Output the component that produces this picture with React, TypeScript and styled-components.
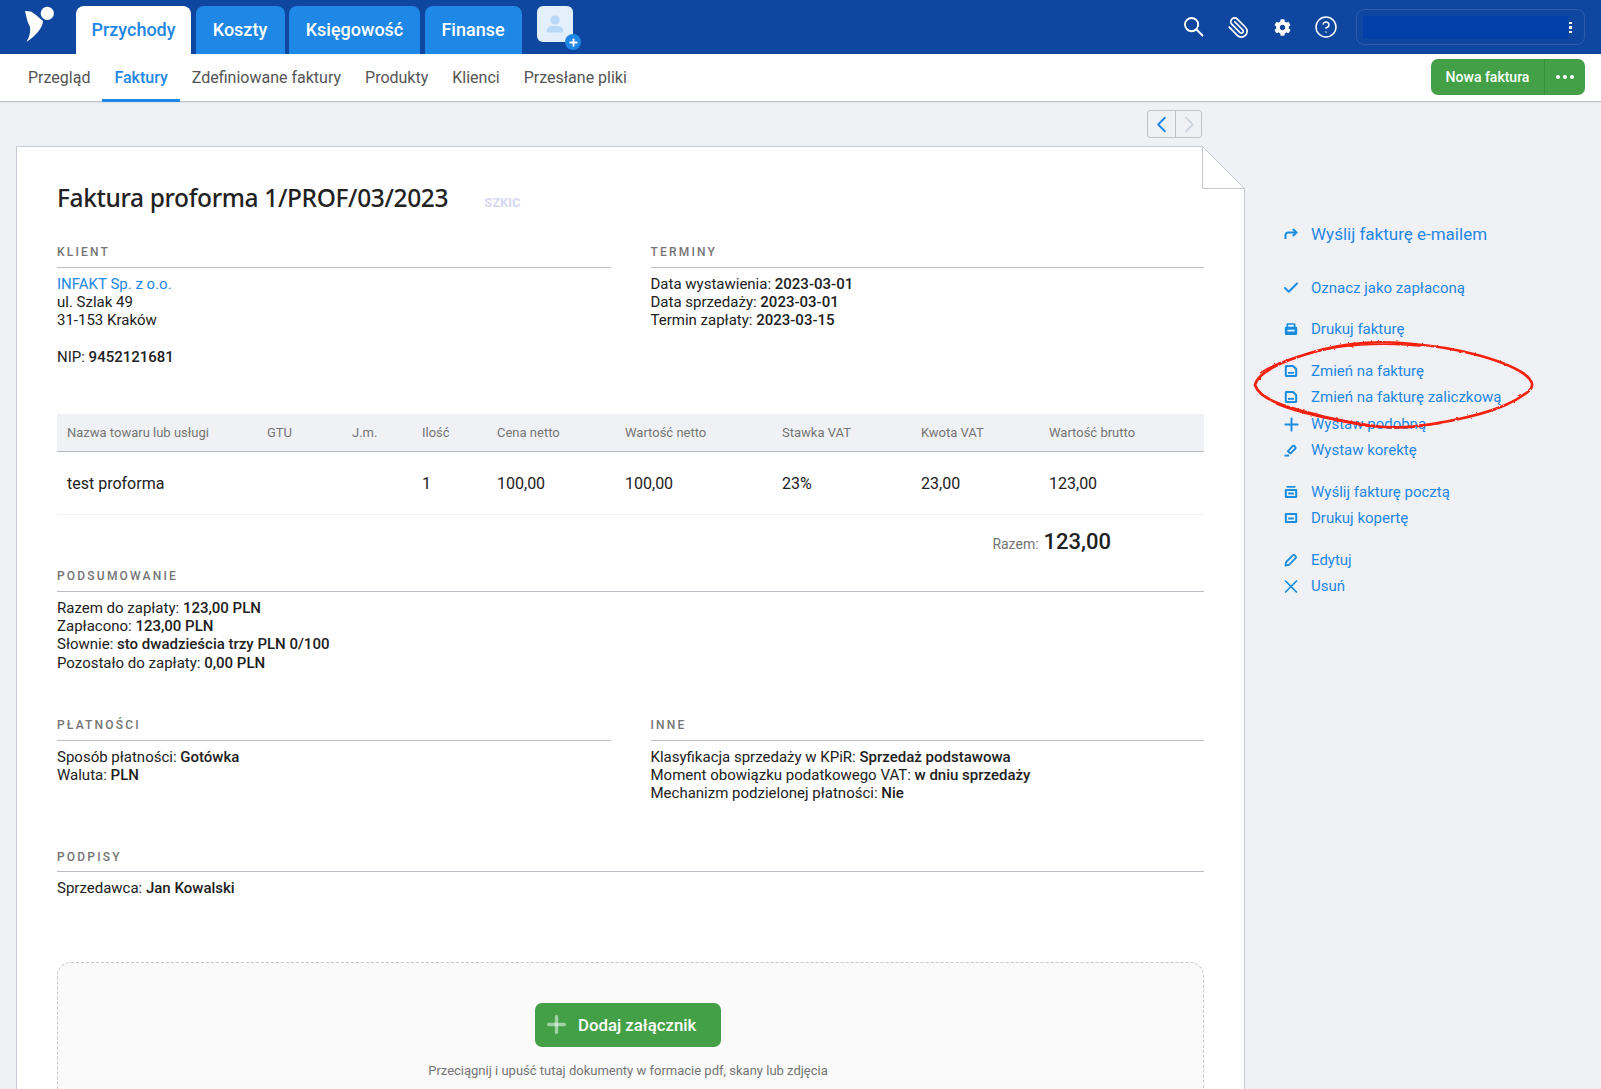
import React from "react";
import styled, { createGlobalStyle } from "styled-components";
import { Paperclip, CircleHelp, Check, Plus, X, ChevronLeft, ChevronRight } from "lucide-react";
import { FaCog } from "react-icons/fa";

const Global = createGlobalStyle`
  html, body { margin: 0; padding: 0; height: 1089px; overflow: hidden; background: #f0f1f4; }
  body { font-family: Roboto, "Liberation Sans", sans-serif; color: #212121; -webkit-font-smoothing: antialiased; }
  * { box-sizing: border-box; }
`;

const Page = styled.div`
  position: relative;
  width: 1601px;
  height: 1089px;
  overflow: hidden;
`;

const Header = styled.header`
  height: 54px;
  background: #0f469f;
  display: flex;
  align-items: flex-end;
  padding-left: 15px;
`;

const LogoBox = styled.div`
  width: 50px;
  height: 50px;
  margin-right: 11px;
  align-self: flex-start;
`;

const Tabs = styled.nav`
  display: flex;
  gap: 4.5px;
`;

const Tab = styled.a<{ $active?: boolean; $w: number }>`
  width: ${(p) => p.$w}px;
  height: 48px;
  display: flex;
  align-items: center;
  justify-content: center;
  border-radius: 8px 8px 0 0;
  padding-bottom: 2px;
  font-size: 18px;
  font-weight: 500;
  background: ${(p) => (p.$active ? "#fff" : "#1f87e5")};
  color: ${(p) => (p.$active ? "#1f87e5" : "#fff")};
`;

const AvatarBtn = styled.div`
  position: relative;
  width: 36px;
  height: 36px;
  margin: 0 0 12px 15.5px;
  border-radius: 6px;
  background: #e3f0fc;
  color: #b7d8f6;
  display: flex;
  align-items: center;
  justify-content: center;
`;

const AvatarPlus = styled.span`
  position: absolute;
  right: -8px;
  bottom: -8px;
  width: 16px;
  height: 16px;
  border-radius: 50%;
  background: #1f87e5;
  color: #fff;
  display: flex;
  align-items: center;
  justify-content: center;
`;

const HeaderRight = styled.div`
  margin-left: auto;
  align-self: stretch;
  display: flex;
  align-items: center;
  padding-right: 16px;
`;

const HeaderIcon = styled.span`
  width: 44px;
  height: 30px;
  display: flex;
  align-items: center;
  justify-content: center;
  color: #fff;
`;

const AccountBox = styled.div`
  width: 229px;
  height: 36px;
  margin-left: 8px;
  border: 1px solid #2c5cab;
  border-radius: 8px;
  display: flex;
  align-items: center;
  padding-left: 6px;
`;

const AccountFill = styled.div`
  width: 205px;
  height: 23px;
  background: #023fa8;
`;

const AccountDots = styled.div`
  width: 3px;
  height: 11px;
  margin-left: 1px;
  background: repeating-linear-gradient(to bottom, #fff 0 2.4px, transparent 2.4px 4.3px);
`;

const SubBar = styled.div`
  height: 48px;
  background: #fff;
  border-bottom: 1px solid #bcbfc4;
  box-shadow: 0 1px 2px rgba(0, 0, 0, 0.06);
  display: flex;
  align-items: stretch;
  padding: 0 16px 1px;
`;

const SubItem = styled.a<{ $active?: boolean }>`
  display: flex;
  align-items: center;
  padding: 0 12px;
  font-size: 16px;
  font-weight: ${(p) => (p.$active ? 500 : 400)};
  color: ${(p) => (p.$active ? "#1f87e5" : "#555")};
  box-shadow: ${(p) => (p.$active ? "inset 0 -3px 0 #1f87e5" : "none")};
  margin-bottom: -2px;
  padding-bottom: 2px;
`;

const SplitButton = styled.div`
  margin-left: auto;
  align-self: center;
  height: 36px;
  width: 154px;
  border-radius: 7px;
  background: #43a047;
  color: #fff;
  display: flex;
  font-size: 14px;
  font-weight: 500;
`;

const SplitMain = styled.div`
  width: 114px;
  display: flex;
  align-items: center;
  justify-content: center;
  border-right: 1px solid #388e3c;
`;

const SplitMore = styled.div`
  flex: 1;
  display: flex;
  align-items: center;
  justify-content: center;
  gap: 3px;
`;

const Dot = styled.i`
  width: 4px;
  height: 4px;
  border-radius: 50%;
  background: #fff;
`;

const Main = styled.main`
  display: flex;
  padding-left: 16px;
`;

const DocColumn = styled.div`
  width: 1229px;
  flex: none;
`;

const PagerRow = styled.div`
  height: 44px;
  padding: 8px 43px 0 0;
  display: flex;
  justify-content: flex-end;
`;

const Pager = styled.div`
  width: 55px;
  height: 28px;
  border: 1px solid #bfc4cc;
  border-radius: 3px;
  display: flex;
`;

const PagerBtn = styled.span<{ $off?: boolean }>`
  flex: 1;
  display: flex;
  align-items: center;
  justify-content: center;
  color: ${(p) => (p.$off ? "#cfd6df" : "#1f87e5")};
  & + & { border-left: 1px solid #bfc4cc; }
`;

const Paper = styled.section`
  position: relative;
  background: #fff;
  border: 1px solid #c5cad3;
  padding: 29px 40px 40px 40px;
`;

const Fold = styled.svg`
  position: absolute;
  top: -1px;
  right: -1px;
`;

const TitleRow = styled.div`
  display: flex;
  align-items: center;
  height: 42px;
`;

const Title = styled.h1`
  margin: 0;
  font-family: "Noto Sans", Roboto, sans-serif;
  font-size: 24.5px;
  font-weight: 500;
  letter-spacing: -0.36px;
  color: #222;
  white-space: nowrap;
`;

const Badge = styled.span`
  margin: 10px 0 0 36px;
  font-size: 13px;
  font-weight: 700;
  color: #d7d7f2;
`;

const Cols = styled.div`
  display: grid;
  grid-template-columns: 554px 553.5px;
  column-gap: 39.5px;
`;

const Section = styled.div<{ $top: number }>`
  margin-top: ${(p) => p.$top}px;
`;

const SectionLabel = styled.div`
  height: 23.5px;
  line-height: 16px;
  padding-bottom: 7px;
  border-bottom: 1px solid #bbbec4;
  font-size: 12px;
  font-weight: 500;
  letter-spacing: 2.2px;
  color: #757575;
  text-transform: uppercase;
`;

const SectionBody = styled.div`
  margin-top: 7px;
  font-size: 15px;
  line-height: 18.4px;
  color: #212121;
  b { font-weight: 500; }
`;

const ClientLink = styled.a`
  color: #1f87e5;
  display: block;
`;

const Table = styled.div`
  margin-top: 47.5px;
`;

const TableGrid = styled.div<{ $head?: boolean }>`
  display: grid;
  grid-template-columns: 200px 85px 70px 75px 128px 157px 139px 128px 1fr;
  align-items: center;
  padding-left: 10px;
  height: ${(p) => (p.$head ? 38 : 63)}px;
  background: ${(p) => (p.$head ? "#f0f1f4" : "#fff")};
  border-bottom: 1px solid ${(p) => (p.$head ? "#b5b8be" : "#f0f1f3")};
  font-size: ${(p) => (p.$head ? 13 : 16)}px;
  color: ${(p) => (p.$head ? "#757575" : "#212121")};
`;

const Total = styled.div`
  height: 53px;
  padding: 14px 93px 0 0;
  display: flex;
  justify-content: flex-end;
  align-items: baseline;
  gap: 5px;
  color: #757575;
  font-size: 14px;
`;

const TotalValue = styled.strong`
  font-size: 22px;
  font-weight: 500;
  color: #212121;
`;

const DropZone = styled.div`
  margin-top: 64px;
  min-height: 220px;
  padding: 40px 5px 0 0;
  border: 1px dashed #c8c8c8;
  border-radius: 14px;
  background: #fafafa;
  display: flex;
  flex-direction: column;
  align-items: center;
`;

const AddButton = styled.div`
  width: 186px;
  height: 44px;
  border-radius: 7px;
  background: #43a047;
  color: #fff;
  display: flex;
  align-items: center;
  padding-left: 8px;
  gap: 8px;
  font-size: 16.8px;
  font-weight: 500;
`;

const AddPlus = styled.span`
  display: flex;
  color: rgba(255, 255, 255, 0.5);
`;

const Caption = styled.div`
  margin-top: 15px;
  font-size: 13px;
  color: #757575;
  line-height: 18px;
`;

const Side = styled.aside`
  padding: 117px 0 0 35px;
  display: flex;
  flex-direction: column;
`;

const ActionGroup = styled.div<{ $top?: number }>`
  margin-top: ${(p) => p.$top ?? 16}px;
`;

const Action = styled.a<{ $big?: boolean }>`
  height: ${(p) => (p.$big ? 30 : 26)}px;
  display: flex;
  align-items: center;
  gap: 9px;
  color: #1f87e5;
  font-size: ${(p) => (p.$big ? 17 : 15)}px;
  white-space: nowrap;
`;

const ActionIcon = styled.span`
  width: 22px;
  height: 22px;
  display: flex;
  align-items: center;
  justify-content: center;
  color: #1a8ce0;
  flex: none;
`;

const Scribble = styled.svg`
  position: absolute;
  left: 1240px;
  top: 330px;
  pointer-events: none;
`;

const Sq: React.FC<{ children: React.ReactNode }> = ({ children }) => (
  <svg width="14" height="14" viewBox="0 0 14 14" fill="currentColor">{children}</svg>
);

const SearchGlyph = () => (
  <svg width="22" height="22" viewBox="0 0 22 22" fill="none" stroke="currentColor" strokeWidth="1.9">
    <circle cx="8.6" cy="8.6" r="6.6" />
    <path d="M13.5 13.5 20 20" />
  </svg>
);

const ForwardIcon = () => (
  <svg width="14" height="14" viewBox="0 0 14 14" fill="none" stroke="currentColor" strokeWidth="2">
    <path d="M1.5 12V8.2A2.7 2.7 0 0 1 4.2 5.5H12" />
    <path d="M8.8 2 12.5 5.5 8.8 9" />
  </svg>
);
const PrintIcon = () => (
  <Sq>
    <path fillRule="evenodd" d="M3.5 1.2h7A1 1 0 0 1 11.5 2.2V4.8h.5A1.2 1.2 0 0 1 13.2 6V11.6A1.3 1.3 0 0 1 12 12.9H2A1.3 1.3 0 0 1 .8 11.6V6A1.2 1.2 0 0 1 2 4.8h.5V2.2A1 1 0 0 1 3.5 1.2ZM4.2 2.8V4.8h5.6V2.8ZM3.4 7.8v1.8h7.2V7.8Z" />
  </Sq>
);
const DocIcon = () => (
  <Sq>
    <path fillRule="evenodd" d="M2.2 1h7.2L13.2 4.6V11.6A1.4 1.4 0 0 1 11.8 13H2.2A1.4 1.4 0 0 1 .8 11.6V2.4A1.4 1.4 0 0 1 2.2 1ZM2.8 3V11H11.2V5.4L8.6 3ZM4 8H10V9.8H4Z" />
  </Sq>
);
const EraserIcon = () => (
  <svg width="14" height="14" viewBox="0 0 14 14" fill="none" stroke="currentColor" strokeWidth="1.9">
    <path d="M5.2 9.6 3.9 8.2 8.6 3.2a1.4 1.4 0 0 1 2 0l.6.6a1.4 1.4 0 0 1 0 2L6.5 10.4Z" />
    <path d="M.5 12.6H5.2" />
  </svg>
);
const PostIcon = () => (
  <Sq>
    <path d="M2.6 1h8.8v1.7H2.6Z" />
    <path fillRule="evenodd" d="M2 4h10A1.2 1.2 0 0 1 13.2 5.2V11.8A1.2 1.2 0 0 1 12 13H2A1.2 1.2 0 0 1 .8 11.8V5.2A1.2 1.2 0 0 1 2 4ZM2.8 6v5h8.4V6ZM4.2 7.4h5.6V9.4H4.2Z" />
  </Sq>
);
const EnvelopeIcon = () => (
  <Sq>
    <path fillRule="evenodd" d="M2 2h10A1.2 1.2 0 0 1 13.2 3.2V10.8A1.2 1.2 0 0 1 12 12H2A1.2 1.2 0 0 1 .8 10.8V3.2A1.2 1.2 0 0 1 2 2ZM2.8 4v6h8.4V4ZM4.2 6.4h5.6V8.4H4.2Z" />
  </Sq>
);
const PenIcon = () => (
  <svg width="14" height="14" viewBox="0 0 14 14" fill="none" stroke="currentColor" strokeWidth="1.8" strokeLinejoin="round">
    <path d="M1.4 12.6 2.2 9 8.8 2.4a1.5 1.5 0 0 1 2.1 0l.7.7a1.5 1.5 0 0 1 0 2.1L5 11.8Z" />
  </svg>
);

const Logo = () => (
  <svg width="50" height="50" viewBox="0 0 50 50" fill="#fff">
    <circle cx="32.3" cy="13.3" r="6.6" />
    <path d="M10 11 16 11.5 21 15 28 21C28 27 21 36 11.5 42 15 36 15.5 31 15 27L12.5 21.5Z" />
  </svg>
);

const rows = ["test proforma", "", "", "1", "100,00", "100,00", "23%", "23,00", "123,00"];
const heads = ["Nazwa towaru lub usługi", "GTU", "J.m.", "Ilość", "Cena netto", "Wartość netto", "Stawka VAT", "Kwota VAT", "Wartość brutto"];

export default function App() {
  return (
    <Page>
      <Global />
      <Header>
        <LogoBox><Logo /></LogoBox>
        <Tabs>
          <Tab $active $w={115}>Przychody</Tab>
          <Tab $w={89}>Koszty</Tab>
          <Tab $w={131}>Księgowość</Tab>
          <Tab $w={97}>Finanse</Tab>
        </Tabs>
        <AvatarBtn>
          <svg width="22" height="22" viewBox="0 0 22 22" fill="currentColor">
            <circle cx="11" cy="7" r="4.6" />
            <path d="M2.6 18.5C2.6 15 5.5 13 8 13h6c2.5 0 5.4 2 5.4 5.5 0 .6-.5 1-1 1H3.6c-.5 0-1-.4-1-1Z" />
          </svg>
          <AvatarPlus><Plus size={11} strokeWidth={4} /></AvatarPlus>
        </AvatarBtn>
        <HeaderRight>
          <HeaderIcon><SearchGlyph /></HeaderIcon>
          <HeaderIcon><Paperclip size={23} strokeWidth={1.8} style={{ transform: "scaleX(-1)" }} /></HeaderIcon>
          <HeaderIcon><FaCog size={17} /></HeaderIcon>
          <HeaderIcon><CircleHelp size={24} strokeWidth={1.5} /></HeaderIcon>
          <AccountBox>
            <AccountFill />
            <AccountDots />
          </AccountBox>
        </HeaderRight>
      </Header>
      <SubBar>
        <SubItem>Przegląd</SubItem>
        <SubItem $active>Faktury</SubItem>
        <SubItem>Zdefiniowane faktury</SubItem>
        <SubItem>Produkty</SubItem>
        <SubItem>Klienci</SubItem>
        <SubItem>Przesłane pliki</SubItem>
        <SplitButton>
          <SplitMain>Nowa faktura</SplitMain>
          <SplitMore><Dot /><Dot /><Dot /></SplitMore>
        </SplitButton>
      </SubBar>
      <Main>
        <DocColumn>
          <PagerRow>
            <Pager>
              <PagerBtn><ChevronLeft size={27} strokeWidth={1.6} /></PagerBtn>
              <PagerBtn $off><ChevronRight size={27} strokeWidth={1.6} /></PagerBtn>
            </Pager>
          </PagerRow>
          <Paper>
            <Fold width="43" height="43" viewBox="0 0 43 43">
              <path d="M0 0H43V43Z" fill="#f0f1f4" />
              <path d="M.5 0V42.5H42.5L.5 .5" fill="#fff" stroke="#c5cad3" />
            </Fold>
            <TitleRow>
              <Title>Faktura proforma 1/PROF/03/2023</Title>
              <Badge>SZKIC</Badge>
            </TitleRow>
            <Cols>
              <Section $top={26}>
                <SectionLabel>Klient</SectionLabel>
                <SectionBody>
                  <ClientLink>INFAKT Sp. z o.o.</ClientLink>
                  ul. Szlak 49<br />
                  31-153 Kraków<br /><br />
                  NIP: <b>9452121681</b>
                </SectionBody>
              </Section>
              <Section $top={26}>
                <SectionLabel>Terminy</SectionLabel>
                <SectionBody>
                  Data wystawienia: <b>2023-03-01</b><br />
                  Data sprzedaży: <b>2023-03-01</b><br />
                  Termin zapłaty: <b>2023-03-15</b>
                </SectionBody>
              </Section>
            </Cols>
            <Table>
              <TableGrid $head>{heads.map((h) => <span key={h}>{h}</span>)}</TableGrid>
              <TableGrid>{rows.map((c, i) => <span key={i}>{c}</span>)}</TableGrid>
            </Table>
            <Total>Razem: <TotalValue>123,00</TotalValue></Total>
            <Section $top={0}>
              <SectionLabel>Podsumowanie</SectionLabel>
              <SectionBody>
                Razem do zapłaty: <b>123,00 PLN</b><br />
                Zapłacono: <b>123,00 PLN</b><br />
                Słownie: <b>sto dwadzieścia trzy PLN 0/100</b><br />
                Pozostało do zapłaty: <b>0,00 PLN</b>
              </SectionBody>
            </Section>
            <Cols>
              <Section $top={45}>
                <SectionLabel>Płatności</SectionLabel>
                <SectionBody>
                  Sposób płatności: <b>Gotówka</b><br />
                  Waluta: <b>PLN</b>
                </SectionBody>
              </Section>
              <Section $top={45}>
                <SectionLabel>Inne</SectionLabel>
                <SectionBody>
                  Klasyfikacja sprzedaży w KPiR: <b>Sprzedaż podstawowa</b><br />
                  Moment obowiązku podatkowego VAT: <b>w dniu sprzedaży</b><br />
                  Mechanizm podzielonej płatności: <b>Nie</b>
                </SectionBody>
              </Section>
            </Cols>
            <Section $top={46}>
              <SectionLabel>Podpisy</SectionLabel>
              <SectionBody>Sprzedawca: <b>Jan Kowalski</b></SectionBody>
            </Section>
            <DropZone>
              <AddButton>
                <AddPlus><Plus size={27} strokeWidth={3} /></AddPlus>
                Dodaj załącznik
              </AddButton>
              <Caption>Przeciągnij i upuść tutaj dokumenty w formacie pdf, skany lub zdjęcia</Caption>
            </DropZone>
          </Paper>
        </DocColumn>
        <Side>
          <Action $big><ActionIcon><ForwardIcon /></ActionIcon>Wyślij fakturę e-mailem</Action>
          <ActionGroup $top={26}>
            <Action><ActionIcon><Check size={18} strokeWidth={2.6} /></ActionIcon>Oznacz jako zapłaconą</Action>
          </ActionGroup>
          <ActionGroup $top={15}>
            <Action><ActionIcon><PrintIcon /></ActionIcon>Drukuj fakturę</Action>
          </ActionGroup>
          <ActionGroup>
            <Action><ActionIcon><DocIcon /></ActionIcon>Zmień na fakturę</Action>
            <Action><ActionIcon><DocIcon /></ActionIcon>Zmień na fakturę zaliczkową</Action>
          </ActionGroup>
          <ActionGroup $top={1}>
            <Action><ActionIcon><Plus size={21} strokeWidth={2.2} /></ActionIcon>Wystaw podobną</Action>
            <Action><ActionIcon><EraserIcon /></ActionIcon>Wystaw korektę</Action>
          </ActionGroup>
          <ActionGroup>
            <Action><ActionIcon><PostIcon /></ActionIcon>Wyślij fakturę pocztą</Action>
            <Action><ActionIcon><EnvelopeIcon /></ActionIcon>Drukuj kopertę</Action>
          </ActionGroup>
          <ActionGroup>
            <Action><ActionIcon><PenIcon /></ActionIcon>Edytuj</Action>
            <Action><ActionIcon><X size={25} strokeWidth={1.9} /></ActionIcon>Usuń</Action>
          </ActionGroup>
        </Side>
      </Main>
      <Scribble width="310" height="110" viewBox="0 0 930 330" fill="none" stroke="#f4200d" strokeWidth="8" strokeLinecap="round">
        <defs>
          <filter id="rough" x="-5%" y="-5%" width="110%" height="110%">
            <feTurbulence type="fractalNoise" baseFrequency="0.09" numOctaves="2" seed="4" />
            <feDisplacementMap in="SourceGraphic" scale="7" />
          </filter>
        </defs>
        <g filter="url(#rough)">
          <path d="M45 165C55 120 150 85 250 58C330 38 430 32 520 42C640 52 780 85 850 130C885 155 885 175 850 195C790 240 660 272 520 290C430 298 350 282 260 262C170 240 60 215 45 165Z" />
          <path d="M62 128C110 95 190 72 280 54C340 44 440 38 540 48" strokeWidth="5" />
          <path d="M110 222C180 252 290 272 380 288C450 296 520 292 600 280" strokeWidth="5" />
        </g>
      </Scribble>
    </Page>
  );
}
